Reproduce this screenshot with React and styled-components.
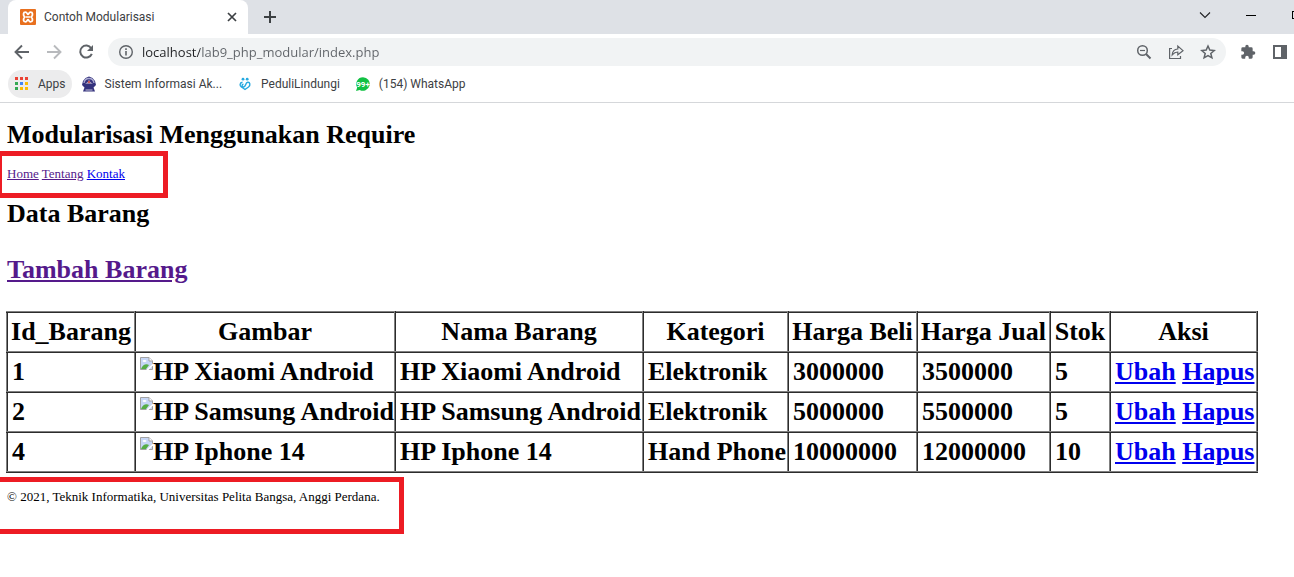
import React from 'react';
import styled, { createGlobalStyle } from 'styled-components';

const GlobalStyle = createGlobalStyle`
  * { box-sizing: border-box; }
  body {
    margin: 0;
    background: #fff;
    color: #000;
    font-family: "Liberation Serif", "Times New Roman", serif;
    font-size: 13px;
    overflow-x: hidden;
  }
  svg { display: block; flex: none; }
`;

const Chrome = styled.header`
  font-family: Roboto, "Segoe UI", sans-serif;
  font-size: 12px;
  color: #3c4043;
  border-bottom: 1px solid #d5d7da;
`;

const TabStrip = styled.div`
  display: flex;
  height: 34px;
  padding-left: 8px;
  background: #dee1e6;
  overflow: hidden;
`;

const Tab = styled.div`
  display: flex;
  align-items: center;
  width: 240px;
  padding: 0 10px 0 12px;
  gap: 8px;
  background: #fff;
  border-radius: 8px 8px 0 0;
`;

const TabTitle = styled.span`
  flex: 1;
  white-space: nowrap;
`;

const IconButton = styled.button`
  display: flex;
  align-items: center;
  justify-content: center;
  flex: none;
  width: ${(p) => p.$size || 16}px;
  height: ${(p) => p.$size || 16}px;
  padding: 0;
  border: 0;
  background: none;
  color: ${(p) => p.$color || '#5f6368'};
`;

const NewTab = styled.div`
  display: flex;
  align-items: center;
  flex: 1;
  padding-left: 14px;
`;

const WindowControls = styled.div`
  display: flex;
  align-items: center;
  height: 29px;
  gap: 30px;
  margin-right: -11px;
`;

const Toolbar = styled.div`
  display: flex;
  align-items: center;
  height: 36px;
  padding: 0 6px 0 14px;
  gap: 16px;
`;

const Omnibox = styled.div`
  display: flex;
  align-items: center;
  flex: 1;
  min-width: 0;
  height: 28px;
  margin: 0 -2px;
  padding: 0 10px;
  gap: 8px;
  border-radius: 14px;
  background: #f1f3f4;
`;

const Address = styled.input`
  flex: 1;
  min-width: 0;
  padding: 0;
  border: 0;
  outline: 0;
  font: 13px "Open Sans", "Segoe UI", sans-serif;
  color: transparent;
  background: linear-gradient(to right, #202124 58px, #5f6368 58px);
  background-clip: text;
`;

const Actions = styled.div`
  display: flex;
  gap: 16px;
`;

const Bookmarks = styled.nav`
  display: flex;
  align-items: center;
  height: 32px;
  padding: 0 8px 4px;
  gap: 3px;
`;

const Bookmark = styled.a`
  display: flex;
  align-items: center;
  height: 28px;
  padding: 0 6px;
  gap: 8px;
  border-radius: 14px;
  color: inherit;
  text-decoration: none;
  white-space: nowrap;
  background: ${(p) => (p.$active ? '#ececed' : 'transparent')};
`;

const Page = styled.main`
  display: flex;
  flex-direction: column;
  align-items: flex-start;
`;

const Heading = styled.h1`
  margin: ${(p) => p.$gap}px 7px 0;
  font-size: 26px;
  line-height: 30px;
`;

const Link = styled.a`
  color: ${(p) => (p.$visited ? '#551a8b' : '#0000ee')};
  text-decoration: underline;
`;

const MarkedNav = styled.nav`
  width: 168px;
  margin-top: 1px;
  padding: 10px 0 11px 5px;
  border: 5px solid #ed1c24;
  border-left-width: 2px;
  line-height: 16px;
`;

const MarkedFooter = styled.footer`
  width: 404px;
  margin-top: 4px;
  padding: 7px 0 24px 7px;
  border: 5px solid #ed1c24;
  border-left: 0;
  line-height: 16px;
`;

const Table = styled.table`
  margin: 26px 6px 0;
  border-collapse: collapse;
  font-size: 26px;
  font-weight: bold;
  line-height: 30px;
  white-space: nowrap;

  th, td {
    padding: 4px 0 4px 4px;
    border: 2px ridge gray;
    text-align: left;
  }
  th { padding: 4px 2px; text-align: center; }
`;

const Column = styled.col`
  width: ${(p) => p.$width}px;
`;

const Picture = styled.span`
  display: flex;
  align-items: flex-start;
`;

const XamppIcon = () => (
  <svg width="16" height="16" viewBox="0 0 16 16">
    <rect width="16" height="16" rx="1" fill="#e8701f" />
    <path d="M5.5 3.2C3 3.2 3 6 4.6 8C3 10 3 12.8 5.5 12.8C7.2 12.8 7.2 10.6 8 10.6S8.8 12.8 10.5 12.8C13 12.8 13 10 11.4 8C13 6 13 3.2 10.5 3.2C8.8 3.2 8.8 5.4 8 5.4S7.2 3.2 5.5 3.2Z" fill="none" stroke="#fff" strokeWidth="1.8" />
    <path d="M5.5 8H10.5" stroke="#fff" strokeWidth="1.5" />
  </svg>
);

const CloseIcon = () => (
  <svg width="12" height="12" viewBox="0 0 12 12"><path d="M2 2L10 10M10 2L2 10" stroke="#3c4043" strokeWidth="1.7" /></svg>
);

const PlusIcon = () => (
  <svg width="14" height="14" viewBox="0 0 14 14"><path d="M7 1V13M1 7H13" stroke="#3c4043" strokeWidth="2" /></svg>
);

const ArrowIcon = ({ forward }) => (
  <svg width="16" height="16" viewBox="0 0 16 16" fill="none" stroke="currentColor" strokeWidth="1.9">
    <path d={forward ? 'M1 8H14M8 1.5L14.5 8L8 14.5' : 'M15 8H2M8 1.5L1.5 8L8 14.5'} />
  </svg>
);

const ReloadIcon = () => (
  <svg width="16" height="16" viewBox="0 0 16 16">
    <path d="M13.2 4.2A6 6 0 1 0 13.8 9.8" fill="none" stroke="currentColor" strokeWidth="2" />
    <path d="M15 1V7H9Z" fill="currentColor" />
  </svg>
);

const InfoIcon = () => (
  <svg width="16" height="16" viewBox="0 0 16 16">
    <circle cx="8" cy="8" r="6.3" fill="none" stroke="#5f6368" strokeWidth="1.4" />
    <path d="M8 7V11.5M8 4.3V5.9" stroke="#5f6368" strokeWidth="1.6" />
  </svg>
);

const ZoomOutIcon = () => (
  <svg width="16" height="16" viewBox="0 0 16 16" fill="none" stroke="#5f6368">
    <circle cx="6.5" cy="6.5" r="4.8" strokeWidth="1.5" />
    <path d="M10 10L14.5 14.5" strokeWidth="1.9" />
    <path d="M4 6.5H9" strokeWidth="1.2" />
  </svg>
);

const ShareIcon = () => (
  <svg width="16" height="16" viewBox="0 0 16 16" fill="none" stroke="#5f6368" strokeWidth="1.2">
    <path d="M4 4.5H1.6V14.5H12.5V12" />
    <path d="M4.2 10.8C4.5 7 6.5 5.2 9.8 5V2L15 6.6L9.8 10.7V8C7.3 8 5.7 9 4.2 10.8Z" />
  </svg>
);

const StarIcon = () => (
  <svg width="16" height="16" viewBox="0 0 16 16" fill="none" stroke="#5f6368" strokeWidth="1.5">
    <path d="M8 2L9.8 6.1L14.2 6.5L10.8 9.4L11.9 13.8L8 11.5L4.1 13.8L5.2 9.4L1.8 6.5L6.2 6.1Z" />
  </svg>
);

const PuzzleIcon = () => (
  <svg width="16" height="16" viewBox="0 0 24 24" fill="#5f6368">
    <path d="M20.5 11H19V7a2 2 0 0 0-2-2h-4V3.5a2.5 2.5 0 0 0-5 0V5H4a2 2 0 0 0-2 2v3.8h1.5a2.7 2.7 0 0 1 0 5.4H2V20a2 2 0 0 0 2 2h3.8v-1.5a2.7 2.7 0 0 1 5.4 0V22H17a2 2 0 0 0 2-2v-4h1.5a2.5 2.5 0 0 0 0-5z" />
  </svg>
);

const PanelIcon = () => (
  <svg width="16" height="16" viewBox="0 0 16 16">
    <path d="M1 1H15V15H1ZM3 3V13H9V3Z" fill="#5f6368" fillRule="evenodd" />
  </svg>
);

const ChevronIcon = () => (
  <svg width="16" height="16" viewBox="0 0 16 16"><path d="M3 5.5L8 10.5L13 5.5" fill="none" stroke="#202124" strokeWidth="1.1" /></svg>
);

const MinimizeIcon = () => (
  <svg width="16" height="16" viewBox="0 0 16 16"><path d="M3 8H13V9H3Z" fill="#000" /></svg>
);

const MaximizeIcon = () => (
  <svg width="16" height="16" viewBox="0 0 16 16"><rect x="3.5" y="4.5" width="9" height="7" fill="none" stroke="#000" /></svg>
);

const APP_COLORS = ['#ea4335', '#ea4335', '#ea4335', '#34a853', '#4285f4', '#fbbc04', '#34a853', '#fbbc04', '#fbbc04'];

const AppsIcon = () => (
  <svg width="16" height="16" viewBox="0 0 16 16">
    {APP_COLORS.map((color, i) => (
      <rect key={i} x={1 + (i % 3) * 5} y={1 + Math.floor(i / 3) * 5} width="3" height="3" fill={color} />
    ))}
  </svg>
);

const CampusIcon = () => (
  <svg width="16" height="16" viewBox="0 0 16 16">
    <path d="M8 0.5L11.5 2L14 5L15 9L12.5 11.5L14 15.5H2L3.5 11.5L1 9L2 5L4.5 2Z" fill="#34327d" />
    <path d="M3 7Q3.500 2.500 8 2.500T13 7" fill="none" stroke="#a9a8d0" strokeWidth="1.4" />
    <path d="M8 4L9.500 6.500L12 7.500H4L6.500 6.500Z" fill="#e6ddea" />
    <circle cx="8" cy="6" r="1.2" fill="#c65555" />
    <path d="M4.500 14H11.500" stroke="#c8c7df" />
  </svg>
);

const PeduliIcon = () => (
  <svg width="16" height="16" viewBox="0 0 16 16">
    <circle cx="6" cy="3.2" r="1.4" fill="#26a9e0" />
    <circle cx="10.2" cy="3.2" r="1.4" fill="#26a9e0" />
    <path d="M5.500 6.200C2.500 6.500 2.500 10 4.500 11L8 13.500L11.500 11C13.800 9 13 6 10.800 6.200C8 6.500 9.200 11 6.500 11C4.500 11 4.700 8.200 6.500 8.200" fill="none" stroke="#26a9e0" strokeWidth="1.4" />
  </svg>
);

const WhatsAppIcon = () => (
  <svg width="16" height="16" viewBox="0 0 16 16">
    <path d="M8 1.2A6.8 6.8 0 1 1 4.7 14L1 15L2.2 11.5A6.8 6.8 0 0 1 8 1.2Z" fill="#12c143" />
    <text x="8" y="11" textAnchor="middle" fontFamily="Roboto, sans-serif" fontWeight="bold" fontSize="8" fill="#fff">99+</text>
  </svg>
);

const BrokenImageIcon = () => (
  <svg width="13" height="13" viewBox="0 0 13 13" aria-hidden="true">
    <path d="M0.5 0.5H9L12.5 4V12.5H0.5Z" fill="#c6d6f5" stroke="#a3a3a3" />
    <path d="M9 0.5V4H12.5" fill="#fff" stroke="#a3a3a3" />
    <ellipse cx="4.5" cy="4" rx="2" ry="1" fill="#fff" />
    <path d="M1 12C3 7.5 6 6.5 9 8L6 12Z" fill="#56ad45" />
    <path d="M6 13L13 6.5V8.5L8.5 13Z" fill="#fff" />
  </svg>
);

const BOOKMARKS = [
  { label: 'Apps', Icon: AppsIcon, active: true },
  { label: 'Sistem Informasi Ak...', Icon: CampusIcon },
  { label: 'PeduliLindungi', Icon: PeduliIcon },
  { label: '(154) WhatsApp', Icon: WhatsAppIcon },
];

const COLUMNS = [
  ['Id_Barang', 128],
  ['Gambar', 260],
  ['Nama Barang', 248],
  ['Kategori', 145],
  ['Harga Beli', 129],
  ['Harga Jual', 133],
  ['Stok', 60],
  ['Aksi', 147],
];

const ITEMS = [
  { id: 1, name: 'HP Xiaomi Android', category: 'Elektronik', buy: 3000000, sell: 3500000, stock: 5 },
  { id: 2, name: 'HP Samsung Android', category: 'Elektronik', buy: 5000000, sell: 5500000, stock: 5 },
  { id: 4, name: 'HP Iphone 14', category: 'Hand Phone', buy: 10000000, sell: 12000000, stock: 10 },
];

export default function App() {
  return (
    <>
      <GlobalStyle />
      <Chrome>
        <TabStrip>
          <Tab>
            <XamppIcon />
            <TabTitle>Contoh Modularisasi</TabTitle>
            <IconButton $size={12} aria-label="Close tab"><CloseIcon /></IconButton>
          </Tab>
          <NewTab>
            <IconButton aria-label="New tab"><PlusIcon /></IconButton>
          </NewTab>
          <WindowControls>
            <IconButton aria-label="Search tabs"><ChevronIcon /></IconButton>
            <IconButton aria-label="Minimize"><MinimizeIcon /></IconButton>
            <IconButton aria-label="Maximize"><MaximizeIcon /></IconButton>
          </WindowControls>
        </TabStrip>
        <Toolbar>
          <IconButton aria-label="Back"><ArrowIcon /></IconButton>
          <IconButton aria-label="Forward" $color="#b8babd"><ArrowIcon forward /></IconButton>
          <IconButton aria-label="Reload"><ReloadIcon /></IconButton>
          <Omnibox>
            <InfoIcon />
            <Address aria-label="Address" defaultValue="localhost/lab9_php_modular/index.php" />
            <Actions>
              <IconButton aria-label="Zoom out"><ZoomOutIcon /></IconButton>
              <IconButton aria-label="Share"><ShareIcon /></IconButton>
              <IconButton aria-label="Bookmark this page"><StarIcon /></IconButton>
            </Actions>
          </Omnibox>
          <IconButton aria-label="Extensions"><PuzzleIcon /></IconButton>
          <IconButton aria-label="Side panel"><PanelIcon /></IconButton>
        </Toolbar>
        <Bookmarks>
          {BOOKMARKS.map(({ label, Icon, active }) => (
            <Bookmark key={label} href="#" $active={active}>
              <Icon />
              {label}
            </Bookmark>
          ))}
        </Bookmarks>
      </Chrome>
      <Page>
        <Heading $gap={17}>Modularisasi Menggunakan Require</Heading>
        <MarkedNav>
          <Link href="#" $visited>Home</Link>{' '}
          <Link href="#" $visited>Tentang</Link>{' '}
          <Link href="#">Kontak</Link>
        </MarkedNav>
        <Heading as="h2" $gap={1}>Data Barang</Heading>
        <Heading as="h2" $gap={26}><Link href="#" $visited>Tambah Barang</Link></Heading>
        <Table>
          <colgroup>
            {COLUMNS.map(([title, width]) => <Column key={title} $width={width} />)}
          </colgroup>
          <thead>
            <tr>{COLUMNS.map(([title]) => <th key={title} scope="col">{title}</th>)}</tr>
          </thead>
          <tbody>
            {ITEMS.map((item) => (
              <tr key={item.id}>
                <td>{item.id}</td>
                <td><Picture><BrokenImageIcon />{item.name}</Picture></td>
                <td>{item.name}</td>
                <td>{item.category}</td>
                <td>{item.buy}</td>
                <td>{item.sell}</td>
                <td>{item.stock}</td>
                <td><Link href="#">Ubah</Link> <Link href="#">Hapus</Link></td>
              </tr>
            ))}
          </tbody>
        </Table>
        <MarkedFooter>© 2021, Teknik Informatika, Universitas Pelita Bangsa, Anggi Perdana.</MarkedFooter>
      </Page>
    </>
  );
}
